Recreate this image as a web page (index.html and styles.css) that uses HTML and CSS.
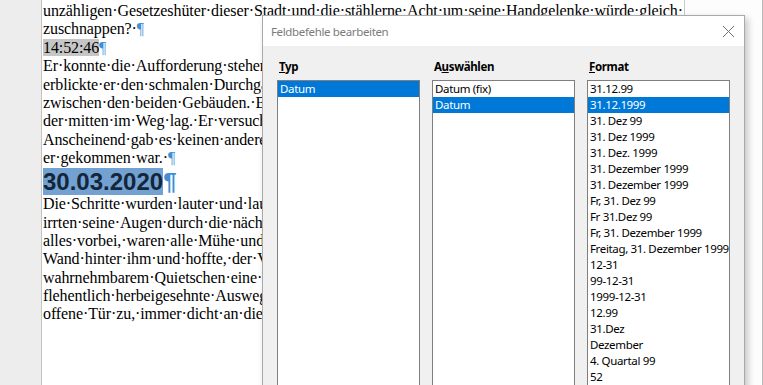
FILE: index.html
```html
<!DOCTYPE html>
<html lang="de">
<head>
    <meta charset="UTF-8">
    <title>Feldbefehle bearbeiten</title>
    <link rel="stylesheet" href="styles.css">
</head>
<body>
    <div class="workspace">
        <div class="gutter"></div>
        <div class="page">
            <div class="line">unzähligen·Gesetzeshüter·dieser·Stadt·und·die·stählerne·Acht·um·seine·Handgelenke·würde·gleich·</div>
            <div class="line">zuschnappen?·<span class="pil">¶</span></div>
            <div class="line"><span class="field">14:52:46</span><span class="pil">¶</span></div>
            <div class="line">Er·konnte·die·Aufforderung·stehen·zu·bleiben·nicht·befolgen·und·lief·weiter.·Endlich</div>
            <div class="line">erblickte·er·den·schmalen·Durchgang·in·der·Mauer·auf·der·rechten·Seite,·dicht</div>
            <div class="line">zwischen·den·beiden·Gebäuden.·Blitzschnell·sprang·er·über·einen·alten·Karren,</div>
            <div class="line">der·mitten·im·Weg·lag.·Er·versuchte·nicht·mehr·zu·denken,·nur·noch·zu·laufen.</div>
            <div class="line">Anscheinend·gab·es·keinen·anderen·Weg·hinaus·als·den,·auf·dem</div>
            <div class="line">er·gekommen·war.·<span class="pil">¶</span></div>
            <div class="line date"><span class="selected">30.03.2020</span><span class="pil">¶</span></div>
            <div class="line">Die·Schritte·wurden·lauter·und·lauter,·er·sah·sich·um,·und·verzweifelt</div>
            <div class="line">irrten·seine·Augen·durch·die·nächtliche·Gasse.·Sollte·jetzt·wirklich</div>
            <div class="line">alles·vorbei,·waren·alle·Mühe·und·Anstrengung·umsonst·gewesen?·Er·drückte·sich·an·die</div>
            <div class="line">Wand·hinter·ihm·und·hoffte,·der·Verfolger·würde·ihn·übersehen.·Da·öffnete·sich·mit·kaum</div>
            <div class="line">wahrnehmbarem·Quietschen·eine·Tür·im·Nachbarhaus.·Ohne·zu·zögern·nahm·er·den</div>
            <div class="line">flehentlich·herbeigesehnte·Ausweg·an·und·rannte·auf·die·einen·Spalt·weit</div>
            <div class="line">offene·Tür·zu,·immer·dicht·an·die·Hauswand·gepresst.</div>
        </div>
        <div class="side"></div>
    </div>

    <div class="dialog">
        <div class="titlebar">
            <span>Feldbefehle bearbeiten</span>
            <svg class="close" width="13" height="13" viewBox="0 0 13 13">
                <path d="M1 1 L12 12 M12 1 L1 12" stroke="#6f6f6f" stroke-width="1" fill="none"/>
            </svg>
        </div>
        <div class="dlg-body">
            <div class="col">
                <div class="label"><u>T</u>yp</div>
                <div class="list">
                    <div class="item active">Datum</div>
                </div>
            </div>
            <div class="col">
                <div class="label">A<u>u</u>swählen</div>
                <div class="list">
                    <div class="item">Datum (fix)</div>
                    <div class="item active">Datum</div>
                </div>
            </div>
            <div class="col">
                <div class="label"><u>F</u>ormat</div>
                <div class="list">
                    <div class="item">31.12.99</div>
                    <div class="item active">31.12.1999</div>
                    <div class="item">31. Dez 99</div>
                    <div class="item">31. Dez 1999</div>
                    <div class="item">31. Dez. 1999</div>
                    <div class="item">31. Dezember 1999</div>
                    <div class="item">31. Dezember 1999</div>
                    <div class="item">Fr, 31. Dez 99</div>
                    <div class="item">Fr 31.Dez 99</div>
                    <div class="item">Fr, 31. Dezember 1999</div>
                    <div class="item">Freitag, 31. Dezember 1999</div>
                    <div class="item">12-31</div>
                    <div class="item">99-12-31</div>
                    <div class="item">1999-12-31</div>
                    <div class="item">12.99</div>
                    <div class="item">31.Dez</div>
                    <div class="item">Dezember</div>
                    <div class="item">4. Quartal 99</div>
                    <div class="item">52</div>
                </div>
            </div>
        </div>
    </div>
</body>
</html>
```

FILE: styles.css
```css
html, body {
    margin: 0;
    height: 100%;
    overflow: hidden;
}
body {
    background: #fff;
    position: relative;
}
.workspace {
    display: flex;
    height: 385px;
}
.gutter {
    width: 41px;
    background: #ededed;
    border-right: 1px solid #c4c4c4;
}
.page {
    width: 643px;
    background: #fff;
    border-right: 1px solid #c9c9c9;
    padding: 2px 0 0 1px;
    box-sizing: border-box;
    overflow: hidden;
    font-family: "Liberation Serif", serif;
    font-size: 16px;
    letter-spacing: -0.1px;
    color: #000;
}
.side {
    flex: 1;
    background: #fdfdfd;
    border-right: 1px solid #b9b9b9;
}
.line {
    white-space: nowrap;
    line-height: 18.4px;
    height: 18.4px;
}
.pil {
    color: #3f8fd4;
}
.field {
    background: #c6c6c6;
}
.date {
    height: 27.6px;
    line-height: 27.6px;
    font-family: "Liberation Sans", sans-serif;
    font-weight: bold;
    font-size: 24px;
    letter-spacing: 0;
}
.selected {
    display: inline-block;
    background: #72a1d2;
    color: #14263a;
}

/* dialog */
.dialog {
    position: absolute;
    left: 262px;
    top: 15px;
    width: 483px;
    height: 400px;
    box-sizing: border-box;
    border: 1px solid #a9a9a9;
    background: #f0f0f0;
    box-shadow: 3px 3px 7px rgba(0, 0, 0, 0.22);
    font-family: "Noto Sans", sans-serif;
    font-size: 11.5px;
    letter-spacing: -0.35px;
}
.titlebar {
    height: 30px;
    background: #fff;
    display: flex;
    align-items: center;
    justify-content: space-between;
    padding: 0 9px 0 8px;
    color: #7b7b7b;
}
.close {
    display: block;
}
.dlg-body {
    display: grid;
    grid-template-columns: 143px 143px 143px;
    column-gap: 12px;
    padding: 13px 0 0 14px;
}
.label {
    font-weight: bold;
    color: #000;
    padding-left: 2px;
    line-height: 16px;
    margin-bottom: 5px;
}
.list {
    background: #fff;
    border: 1px solid #7f7f7f;
    height: 340px;
}
.item {
    height: 16px;
    line-height: 16px;
    padding-left: 2px;
    white-space: nowrap;
    color: #000;
}
.item.active {
    background: #0078d7;
    color: #fff;
}
```
